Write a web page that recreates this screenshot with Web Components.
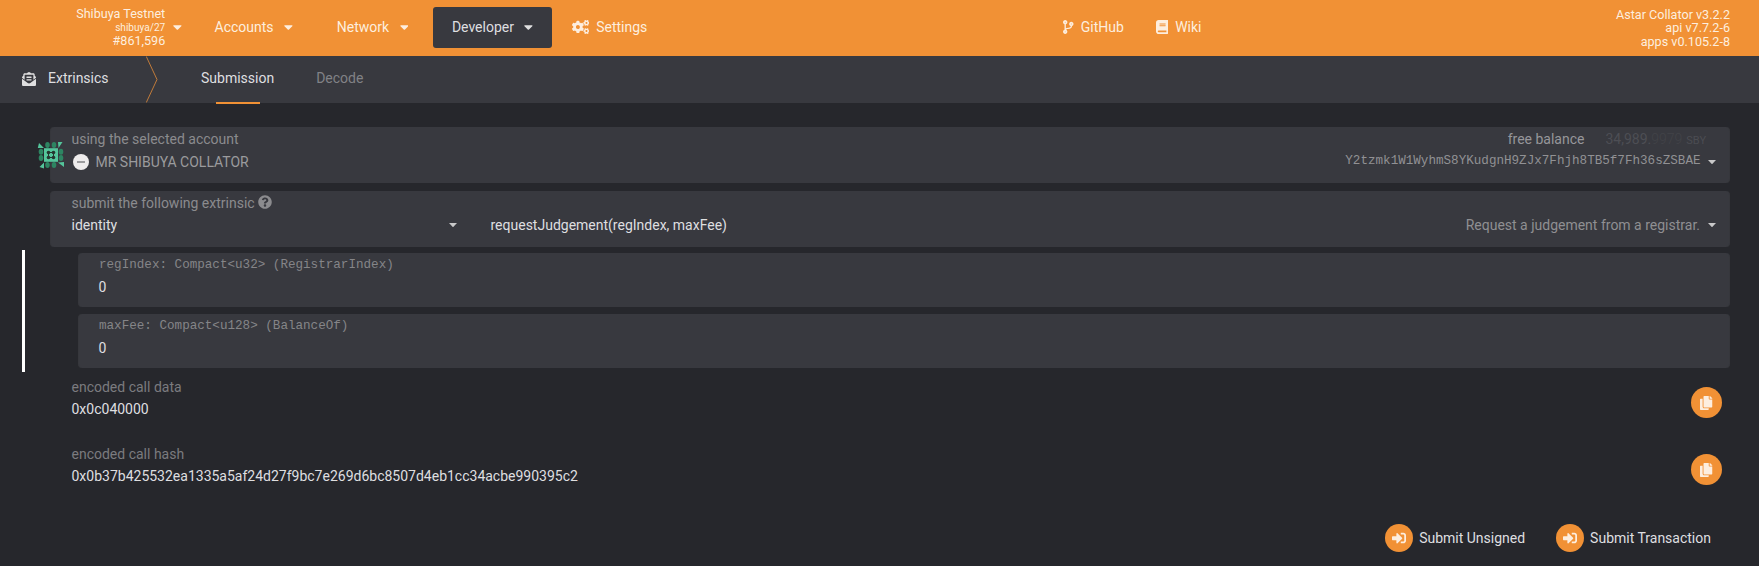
<!DOCTYPE html>
<html lang="en">
<head>
<meta charset="utf-8">
<title>Extrinsics</title>
<style>
html, body { margin: 0; height: 100%; background: #26272c; overflow: hidden; }
body { font: 14px/20px Roboto, sans-serif; color: #dfdfe0; }
</style>
</head>
<body>
<extrinsics-app></extrinsics-app>
<script>
const cogSmall = 'M512.1 191l-8.2 14.3c-3 5.3-9.4 7.5-15.1 5.4-11.8-4.4-22.6-10.7-32.1-18.6-4.6-3.8-5.8-10.5-2.8-15.7l8.2-14.3c-6.9-8-12.3-17.3-15.9-27.4h-16.5c-6 0-11.2-4.3-12.2-10.3-2-12-2.1-24.6 0-37.1 1-6 6.2-10.4 12.2-10.4h16.5c3.6-10.1 9-19.4 15.9-27.4l-8.2-14.3c-3-5.2-1.9-11.9 2.8-15.7 9.5-7.9 20.4-14.2 32.1-18.6 5.7-2.1 12.1.1 15.1 5.4l8.2 14.3c10.5-1.9 21.2-1.9 31.7 0L552 6.3c3-5.3 9.4-7.5 15.1-5.4 11.8 4.4 22.6 10.7 32.1 18.6 4.6 3.8 5.8 10.5 2.8 15.7l-8.2 14.3c6.9 8 12.3 17.3 15.9 27.4h16.5c6 0 11.2 4.3 12.2 10.3 2 12 2.1 24.6 0 37.1-1 6-6.2 10.4-12.2 10.4h-16.5c-3.6 10.1-9 19.4-15.9 27.4l8.2 14.3c3 5.2 1.9 11.9-2.8 15.7-9.5 7.9-20.4 14.2-32.1 18.6-5.7 2.1-12.1-.1-15.1-5.4l-8.2-14.3c-10.4 1.9-21.2 1.9-31.7 0zm-10.5-58.8c38.5 29.6 82.4-14.3 52.8-52.8-38.5-29.7-82.4 14.3-52.8 52.8z';
const cogLarge = 'M386.3 286.1l33.7 16.8c10.1 5.8 14.5 18.1 10.5 29.1-8.9 24.2-26.4 46.4-42.6 65.8-7.4 8.9-20.2 11.1-30.3 5.3l-29.1-16.8c-16 13.7-34.6 24.6-54.9 31.7v33.6c0 11.6-8.3 21.6-19.7 23.6-24.6 4.2-50.4 4.4-75.9 0-11.5-2-20-11.9-20-23.6V418c-20.3-7.2-38.9-18-54.9-31.7L74 403c-10 5.8-22.9 3.6-30.3-5.3-16.2-19.4-33.3-41.6-42.2-65.7-4-10.9.4-23.2 10.5-29.1l33.3-16.8c-3.9-20.9-3.9-42.4 0-63.4L12 205.8c-10.1-5.8-14.6-18.1-10.5-29 8.9-24.2 26-46.4 42.2-65.8 7.4-8.9 20.2-11.1 30.3-5.3l29.1 16.8c16-13.7 34.6-24.6 54.9-31.7V57.1c0-11.5 8.2-21.5 19.6-23.5 24.6-4.2 50.5-4.4 76-.1 11.5 2 20 11.9 20 23.6v33.6c20.3 7.2 38.9 18 54.9 31.7l29.1-16.8c10-5.8 22.9-3.6 30.3 5.3 16.2 19.4 33.2 41.6 42.1 65.8 4 10.9.1 23.2-10 29.1l-33.7 16.8c3.9 21 3.9 42.5 0 63.5zm-117.6 21.1c59.2-77-28.7-164.9-105.7-105.7-59.2 77 28.7 164.9 105.7 105.7z';
const path = d => `<path d="${d}"/>`;
const ICONS = {
  caret: [320, path('M31.3 192h257.3c17.8 0 26.7 21.5 14.1 34.1L174.1 354.8c-7.8 7.8-20.5 7.8-28.3 0L17.2 226.1C4.6 213.5 13.5 192 31.3 192z')],
  copy: [448, path('M320 448v40c0 13.255-10.745 24-24 24H24c-13.255 0-24-10.745-24-24V120c0-13.255 10.745-24 24-24h72v296c0 30.879 25.121 56 56 56h168zm0-344V0H152c-13.255 0-24 10.745-24 24v368c0 13.255 10.745 24 24 24h272c13.255 0 24-10.745 24-24V128H344c-13.2 0-24-10.8-24-24zm120.971-31.029L375.029 7.029A24 24 0 0 0 358.059 0H352v96h96v-6.059a24 24 0 0 0-7.029-16.97z')],
  'sign-in': [512, path('M416 448h-84c-6.6 0-12-5.4-12-12v-40c0-6.6 5.4-12 12-12h84c17.7 0 32-14.3 32-32V160c0-17.7-14.3-32-32-32h-84c-6.6 0-12-5.4-12-12V76c0-6.6 5.4-12 12-12h84c53 0 96 43 96 96v192c0 53-43 96-96 96zm-47-201L201 79c-15-15-41-4.5-41 17v96H24c-13.3 0-24 10.7-24 24v96c0 13.3 10.7 24 24 24h136v96c0 21.5 26 32 41 17l168-168c9.3-9.4 9.3-24.6 0-34z')],
  branch: [384, path('M384 144c0-44.2-35.8-80-80-80s-80 35.8-80 80c0 36.4 24.3 67.1 57.5 76.8-.6 16.1-4.2 28.5-11 36.9-15.4 19.2-49.3 22.4-85.2 25.7-28.2 2.6-57.4 5.4-81.3 16.9v-144c32.5-10.2 56-40.5 56-76.3 0-44.2-35.8-80-80-80S0 35.8 0 80c0 35.8 23.5 66.1 56 76.3v199.3C23.5 365.9 0 396.2 0 432c0 44.2 35.8 80 80 80s80-35.8 80-80c0-34-21.2-63.1-51.2-74.6 3.1-5.2 7.8-9.8 14.9-13.4 16.2-8.2 40.4-10.4 66.1-12.8 42.2-3.9 90-8.4 118.2-43.4 14-17.4 21.1-39.8 21.6-67.9 31.6-10.8 54.4-40.7 54.4-75.9zM80 64c8.8 0 16 7.2 16 16s-7.2 16-16 16-16-7.2-16-16 7.2-16 16-16zm0 384c-8.8 0-16-7.2-16-16s7.2-16 16-16 16 7.2 16 16-7.2 16-16 16zm224-320c8.8 0 16 7.2 16 16s-7.2 16-16 16-16-7.2-16-16 7.2-16 16-16z')],
  book: [448, path('M448 360V24c0-13.3-10.7-24-24-24H96C43 0 0 43 0 96v320c0 53 43 96 96 96h328c13.3 0 24-10.7 24-24v-16c0-7.5-3.5-14.3-8.9-18.7-4.2-15.4-4.2-59.3 0-74.7 5.4-4.3 8.9-11.1 8.9-18.6zM128 134c0-3.3 2.7-6 6-6h212c3.3 0 6 2.7 6 6v20c0 3.3-2.7 6-6 6H134c-3.3 0-6-2.7-6-6v-20zm0 64c0-3.3 2.7-6 6-6h212c3.3 0 6 2.7 6 6v20c0 3.3-2.7 6-6 6H134c-3.3 0-6-2.7-6-6v-20zm253.4 250H96c-17.7 0-32-14.3-32-32 0-17.6 14.4-32 32-32h285.4c-1.9 17.1-1.9 46.9 0 64z')],
  envelope: [512, path('M176 216h160c8.84 0 16-7.16 16-16v-16c0-8.84-7.16-16-16-16H176c-8.84 0-16 7.16-16 16v16c0 8.84 7.16 16 16 16zm-16 80c0 8.84 7.16 16 16 16h160c8.84 0 16-7.16 16-16v-16c0-8.84-7.16-16-16-16H176c-8.84 0-16 7.16-16 16v16zm96 121.13c-16.42 0-32.84-5.06-46.86-15.19L0 250.86V464c0 26.51 21.49 48 48 48h416c26.51 0 48-21.49 48-48V250.86L302.86 401.94c-14.02 10.12-30.44 15.19-46.86 15.19zm237.61-254.18c-8.85-6.94-17.24-13.47-29.61-22.81V96c0-26.51-21.49-48-48-48h-77.55c-3.04-2.2-5.87-4.26-9.04-6.56C312.6 29.17 279.2-.35 256 0c-23.2-.35-56.59 29.17-73.41 41.44-3.17 2.3-6 4.36-9.04 6.56H96c-26.51 0-48 21.49-48 48v44.14c-12.37 9.33-20.76 15.87-29.61 22.81A47.995 47.995 0 0 0 0 200.72v10.65l96 69.35V96h320v184.72l96-69.35v-10.65c0-14.74-6.78-28.67-18.39-37.77z')],
  question: [512, path('M504 256c0 136.997-111.043 248-248 248S8 392.997 8 256C8 119.083 119.043 8 256 8s248 111.083 248 248zM262.655 90c-54.497 0-89.255 22.957-116.549 63.758-3.536 5.286-2.353 12.415 2.715 16.258l34.699 26.31c5.205 3.947 12.621 3.008 16.665-2.122 17.864-22.658 30.113-35.797 57.303-35.797 20.429 0 45.698 13.148 45.698 32.958 0 14.976-12.363 22.667-32.534 33.976C247.128 238.528 216 254.941 216 296v4c0 6.627 5.373 12 12 12h56c6.627 0 12-5.373 12-12v-1.333c0-28.462 83.186-29.647 83.186-106.667 0-58.002-60.165-102-116.531-102zM256 338c-25.365 0-46 20.635-46 46 0 25.364 20.635 46 46 46s46-20.636 46-46c0-25.364-20.635-46-46-46z')],
  cogs: [640, path(cogSmall) + path(cogLarge) + `<g transform="translate(0 299)">${path(cogSmall)}</g>`]
};

// Registers an element whose shadow root is stamped from a style and a markup string.
function define(name, style, markup) {
  const template = document.createElement('template');
  template.innerHTML = `<style>${style}</style>${markup}`;
  customElements.define(name, class extends HTMLElement {
    constructor() {
      super();
      this.attachShadow({ mode: 'open' }).append(template.content.cloneNode(true));
    }
  });
}

customElements.define('ui-icon', class extends HTMLElement {
  connectedCallback() {
    const [width, shape] = ICONS[this.getAttribute('name')];
    const root = this.shadowRoot || this.attachShadow({ mode: 'open' });
    root.innerHTML = `<style>:host{display:block;flex:none;height:14px}svg{display:block;height:14px;width:${width * 14 / 512}px;fill:currentColor}</style>
      <svg viewBox="0 0 ${width} 512">${shape}</svg>`;
  }
});

define('drop-arrow',
  `:host{display:block;flex:none;width:8px;height:4px;color:#c9c9ca} svg{display:block;fill:currentColor}`,
  `<svg width="8" height="4" viewBox="0 0 8 4"><path d="M0 0h8L4.5 3.7a.7.7 0 0 1-1 0z"/></svg>`);

define('chain-info',
  `:host{display:flex;align-items:center;gap:7.5px;width:181.5px;justify-content:flex-end;color:#fdeedf}
   .lines{text-align:right;font-size:12.6px;line-height:13.5px;margin-top:-1px}
   .lines ::slotted(small){display:block;font-size:10.08px}
   .lines ::slotted(span){display:block}
   ui-icon{margin-top:-2px}`,
  `<div class="lines"><slot></slot></div><ui-icon name="caret"></ui-icon>`);

define('nav-item',
  `:host{display:flex;align-items:center;height:41px;padding:0 19px 1px;border-radius:3px;box-sizing:border-box;color:#fdeedf;white-space:nowrap}
   :host([active]){background:#38393f;color:#dfdfe0}
   ::slotted(ui-icon){margin:0 7px 0 0}
   ::slotted(ui-icon[name=caret]){margin:0 0 0 10.5px}`,
  `<slot></slot>`);

define('top-bar',
  `:host{display:flex;height:56px;background:#f19135;box-sizing:border-box;padding-right:29px;line-height:20px}
   nav{display:flex;flex:1;align-items:flex-start;padding-top:7px}
   .version{color:#fdeedf;text-align:right;font-size:12.6px;line-height:13.5px;padding-top:7.5px}
   .version span{display:block}
   .accounts{margin-left:14px}.network{margin-left:6px}.developer{margin-left:5.5px}.github{margin-left:378px}.wiki{margin-left:-6px}.settings{margin-left:.5px}`,
  `<chain-info><span>Shibuya Testnet</span><small>shibuya/27</small><span>#861,596</span></chain-info>
   <nav>
     <nav-item class="accounts">Accounts<ui-icon name="caret"></ui-icon></nav-item>
     <nav-item class="network">Network<ui-icon name="caret"></ui-icon></nav-item>
     <nav-item class="developer" active>Developer<ui-icon name="caret"></ui-icon></nav-item>
     <nav-item class="settings"><ui-icon name="cogs"></ui-icon>Settings</nav-item>
     <nav-item class="github"><ui-icon name="branch"></ui-icon>GitHub</nav-item>
     <nav-item class="wiki"><ui-icon name="book"></ui-icon>Wiki</nav-item>
   </nav>
   <div class="version"><span>Astar Collator v3.2.2</span><span>api v7.7.2-6</span><span>apps v0.105.2-8</span></div>`);

define('tab-bar',
  `:host{display:flex;height:47px;background:#38393f;padding-left:22px;box-sizing:border-box}
   .title{display:flex;align-items:flex-start;width:124px;padding-top:12px;box-sizing:border-box}
   .title ui-icon{margin:4px 12px 0 0}
   .sep{display:block;width:12px;height:47px;margin-right:43px;fill:none;stroke:#c07b3b}
   .tab{position:relative;padding-top:12px;margin-right:42px}
   .tab.on::after{content:"";position:absolute;left:15px;bottom:-1px;width:44px;height:2px;background:#f19135}
   .off{color:#818286}`,
  `<div class="title"><ui-icon name="envelope"></ui-icon><span>Extrinsics</span></div>
   <svg class="sep" viewBox="0 0 12 47"><path d="M.3 0.5 11 23.5 .3 46.5"/></svg>
   <div class="tab on">Submission</div><div class="tab off">Decode</div>`);

define('field-box',
  `:host{display:block;position:relative;box-sizing:border-box;height:56px;border-radius:4px;background:#38393f;padding:2px 13px 0 20.5px;border:1px solid #36373c;border-width:0 1px}
   .label,.value{display:flex;align-items:center;height:22px;line-height:22px;white-space:nowrap}
   .label{color:#8b8b8e;height:20px;line-height:20px}
   .value{padding-top:1px}`,
  `<div class="label"><slot name="label"></slot></div><div class="value"><slot></slot></div>`);

define('param-box',
  `:host{display:block;box-sizing:border-box;height:54px;border-radius:4px;background:#38393f;padding:2px 20px 0;border:1px solid #36373c;border-width:0 1px}
   .label{font:12.6px/20px "Liberation Mono",monospace;color:#858588}
   .value{line-height:22px;padding-top:1px;margin-left:-.5px}`,
  `<div class="label"><slot name="label"></slot></div><div class="value"><slot></slot></div>`);

define('round-button',
  `:host{display:flex;align-items:center;white-space:nowrap}
   i{display:flex;align-items:center;justify-content:center;flex:none;width:var(--size,28px);height:var(--size,28px);border-radius:50%;background:#f19135;color:#fdeedf}
   ::slotted(span){margin-left:6.5px}`,
  `<i><slot name="icon"></slot></i><slot></slot>`);

define('output-row',
  `:host{display:flex;justify-content:space-between;align-items:flex-start;height:67px;box-sizing:border-box;padding:0 37px 0 71.5px}
   .label{color:#7b7b7f}.value{line-height:22px;padding-top:1px}
   round-button{--size:31px;margin-top:10px}`,
  `<div><div class="label"><slot name="label"></slot></div><div class="value"><slot></slot></div></div>
   <round-button><ui-icon slot="icon" name="copy"></ui-icon></round-button>`);

define('account-identicon',
  `:host{display:block;width:28px;height:28px} svg{display:block}`,
  `<svg width="28" height="28" viewBox="0 0 28 28">
    <g fill="#2d8562">
      <ellipse cx="10.5" cy="4" rx="2.3" ry="3"/><ellipse cx="17" cy="4" rx="2.3" ry="3"/>
      <ellipse cx="10.5" cy="24" rx="2.3" ry="3"/><ellipse cx="17" cy="24" rx="2.3" ry="3"/>
      <ellipse cx="4" cy="10.7" rx="2.3" ry="3"/><ellipse cx="4" cy="17" rx="2.3" ry="3"/>
      <ellipse cx="24" cy="10.7" rx="2.3" ry="3"/><ellipse cx="24" cy="17" rx="2.3" ry="3"/>
    </g>
    <g fill="#54c59b">
      <path d="M2 2l5 5H.800zM21 1h4.500L21.500 7zM27 21v5L21 21.500zM7 21.500v6L2.500 26z"/>
      <path d="M7 7.200h14v13.600H7z"/>
    </g>
    <g fill="#26352f"><circle cx="11.500" cy="11.500" r="1.800"/><circle cx="16.500" cy="11.500" r="1.800"/><circle cx="11.500" cy="16.500" r="1.800"/><circle cx="16.500" cy="16.500" r="1.800"/><path d="M13 11h2v1h-2zM13 16h2v1h-2zM11 13h1v2h-1zM16 13h1v2h-1z"/></g>
  </svg>`);

define('extrinsics-app',
  `:host{display:block;height:566px}
   main{padding-top:24px}
   field-box{margin:0 29px 8px 50px}
   .icon{position:absolute;left:-14px;top:14px}
   .badge{display:block;flex:none;width:16px;height:16px;margin:1px 6.500px 0 1.5px}
   .name{color:#9b9b9d;padding-top:2px}
   .balance{position:absolute;right:23px;top:2px;line-height:20px;color:#96969a;display:flex;align-items:baseline}
   .amount{color:#4d4e54;margin-left:21px}.frac{color:#424348;font-weight:300}.unit{font-size:11px;color:#4b4c52;margin-left:4px}
   .address{font:12.6px/20px "Liberation Mono",monospace;color:#919194;margin-left:auto;padding-bottom:1px}
   .address + drop-arrow{margin:2px 0 0 7.500px}
   .help{margin-left:3.500px;margin-top:-2px}
   .section{width:377px}
   .hint{margin-left:auto;color:#8f8f92}
   .hint + drop-arrow{margin:0 0 0 8px}
   .method{flex:none;margin-left:34px}
   .params{margin:-5px 29px 0 22px;border-left:3px solid #fff;height:122px;box-sizing:border-box;padding:3px 0 0 53px}
   .params param-box{margin-bottom:7px}
   .outputs{padding-top:5px}
   footer{display:flex;justify-content:flex-end;gap:30.500px;padding:13px 48px 0 0}`,
  `<top-bar></top-bar>
   <tab-bar></tab-bar>
   <main>
     <field-box>
       <span slot="label">using the selected account</span>
       <div slot="label" class="balance"><span>free balance</span><span class="amount">34,989.</span><span class="frac">9979</span><span class="unit">SBY</span></div>
       <account-identicon class="icon"></account-identicon>
       <svg class="badge" viewBox="0 0 16 16"><circle cx="8" cy="8" r="8" fill="#eeecec"/><path d="M4 7h8v2H4z" fill="#9c9c9e"/></svg>
       <span class="name">MR SHIBUYA COLLATOR</span>
       <span class="address">Y2tzmk1W1WyhmS8YKudgnH9ZJx7Fhjh8TB5f7Fh36sZSBAE</span><drop-arrow></drop-arrow>
     </field-box>
     <field-box>
       <span slot="label">submit the following extrinsic</span><ui-icon slot="label" class="help" name="question"></ui-icon>
       <span class="section">identity</span><drop-arrow></drop-arrow>
       <span class="method">requestJudgement(regIndex, maxFee)</span>
       <span class="hint">Request a judgement from a registrar.</span><drop-arrow></drop-arrow>
     </field-box>
     <div class="params">
       <param-box><span slot="label">regIndex: Compact&lt;u32&gt; (RegistrarIndex)</span>0</param-box>
       <param-box><span slot="label">maxFee: Compact&lt;u128&gt; (BalanceOf)</span>0</param-box>
     </div>
     <div class="outputs">
       <output-row><span slot="label">encoded call data</span>0x0c040000</output-row>
       <output-row><span slot="label">encoded call hash</span>0x0b37b425532ea1335a5af24d27f9bc7e269d6bc8507d4eb1cc34acbe990395c2</output-row>
     </div>
     <footer>
       <round-button><ui-icon slot="icon" name="sign-in"></ui-icon><span>Submit Unsigned</span></round-button>
       <round-button><ui-icon slot="icon" name="sign-in"></ui-icon><span>Submit Transaction</span></round-button>
     </footer>
   </main>`);
</script>
</body>
</html>
